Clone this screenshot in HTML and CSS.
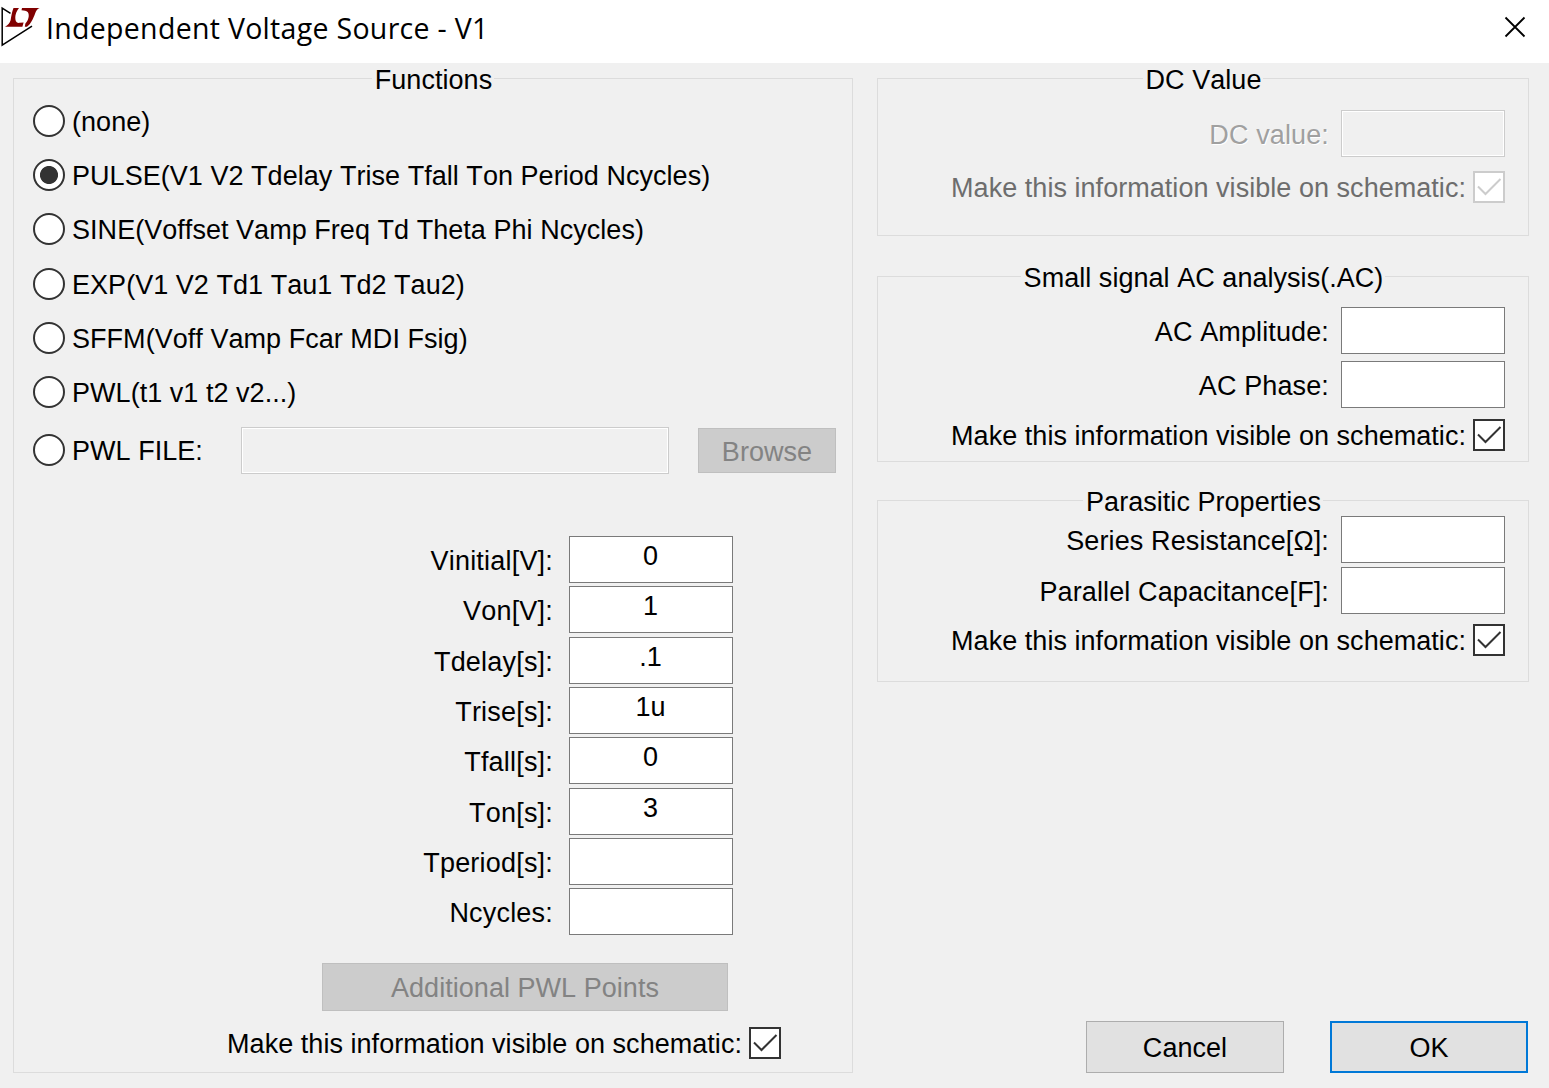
FILE: index.html
```html
<!DOCTYPE html>
<html lang="en">
<head>
<meta charset="utf-8">
<title>Independent Voltage Source - V1</title>
<link rel="stylesheet" href="styles.css">
</head>
<body>
<header class="titlebar">
  <svg class="logo" width="42" height="50" viewBox="0 0 42 50">
    <path d="M10.500 13.300L2.200 8V45.200L32 26.200" fill="none" stroke="#000" stroke-width="1.500"/>
    <path d="M13.500 8H19c-3 3.500-4.500 8.500-3.200 13 .8 1.700 2.400 2.200 4 1.800l3.800-.3-1.200 4.300H5c2.800-1.500 4.800-3.500 5.600-6.500.8-4.500 1.300-8.500 2.900-12.300z" fill="#800000"/>
    <path d="M22 8h17.700c-2.400.8-3.600 2.600-4.500 5.200-1.800 5-4.200 10.800-8.200 13.500h-2.200l.6-3.200c2.800-3 4.600-8.300 2.300-11.500-1.300-1.400-3.500-1.700-6.200-1.800z" fill="#800000"/>
  </svg>
  <h1 class="title">Independent Voltage Source - V1</h1>
  <svg class="close" width="22" height="22" viewBox="0 0 22 22"><path d="M1.500 1.500l19 19M20.500 1.500l-19 19" stroke="#000" stroke-width="1.800" fill="none"/></svg>
</header>
<main class="dialog">
  <section class="group functions">
    <h2 class="legend"><span>Functions</span></h2>
    <div class="radios">
      <div class="radio"><i class="dot"></i><span>(none)</span></div>
      <div class="radio"><i class="dot on"></i><span>PULSE(V1 V2 Tdelay Trise Tfall Ton Period Ncycles)</span></div>
      <div class="radio"><i class="dot"></i><span>SINE(Voffset Vamp Freq Td Theta Phi Ncycles)</span></div>
      <div class="radio low"><i class="dot"></i><span>EXP(V1 V2 Td1 Tau1 Td2 Tau2)</span></div>
      <div class="radio low"><i class="dot"></i><span>SFFM(Voff Vamp Fcar MDI Fsig)</span></div>
      <div class="radio low"><i class="dot"></i><span>PWL(t1 v1 t2 v2...)</span></div>
    </div>
    <div class="file">
      <div class="radio low"><i class="dot"></i><span>PWL FILE:</span></div>
      <div class="field off path"></div>
      <div class="button off browse">Browse</div>
    </div>
    <div class="params">
      <span class="label">Vinitial[V]:</span><div class="field">0</div>
      <span class="label">Von[V]:</span><div class="field">1</div>
      <span class="label">Tdelay[s]:</span><div class="field">.1</div>
      <span class="label">Trise[s]:</span><div class="field">1u</div>
      <span class="label">Tfall[s]:</span><div class="field">0</div>
      <span class="label">Ton[s]:</span><div class="field">3</div>
      <span class="label">Tperiod[s]:</span><div class="field"></div>
      <span class="label">Ncycles:</span><div class="field"></div>
    </div>
    <div class="button off points">Additional PWL Points</div>
    <div class="visible">
      <span>Make this information visible on schematic:</span>
      <svg class="check" width="32" height="32" viewBox="0 0 32 32"><rect x="1" y="1" width="30" height="30"/><path d="M5 15.500l7.500 7.500L27.500 8"/></svg>
    </div>
  </section>
  <div class="side">
    <section class="group dc">
      <h2 class="legend"><span>DC Value</span></h2>
      <div class="row"><span class="label etched">DC value:</span><div class="field off"></div></div>
      <div class="visible dim">
        <span>Make this information visible on schematic:</span>
        <svg class="check" width="32" height="32" viewBox="0 0 32 32"><rect x="1" y="1" width="30" height="30"/><path d="M5 15.500l7.500 7.500L27.500 8"/></svg>
      </div>
    </section>
    <section class="group ac">
      <h2 class="legend"><span>Small signal AC analysis(.AC)</span></h2>
      <div class="row"><span class="label">AC Amplitude:</span><div class="field"></div></div>
      <div class="row"><span class="label">AC Phase:</span><div class="field"></div></div>
      <div class="visible">
        <span>Make this information visible on schematic:</span>
        <svg class="check" width="32" height="32" viewBox="0 0 32 32"><rect x="1" y="1" width="30" height="30"/><path d="M5 15.500l7.500 7.500L27.500 8"/></svg>
      </div>
    </section>
    <section class="group parasitic">
      <h2 class="legend"><span>Parasitic Properties</span></h2>
      <div class="row"><span class="label">Series Resistance[Ω]:</span><div class="field"></div></div>
      <div class="row"><span class="label">Parallel Capacitance[F]:</span><div class="field"></div></div>
      <div class="visible">
        <span>Make this information visible on schematic:</span>
        <svg class="check" width="32" height="32" viewBox="0 0 32 32"><rect x="1" y="1" width="30" height="30"/><path d="M5 15.500l7.500 7.500L27.500 8"/></svg>
      </div>
    </section>
    <footer class="actions">
      <div class="button">Cancel</div>
      <div class="button ok">OK</div>
    </footer>
  </div>
</main>
</body>
</html>
```
FILE: styles.css
```css
* { box-sizing: border-box; }
body {
  margin: 0;
  width: 1549px;
  height: 1088px;
  overflow: hidden;
  display: flex;
  flex-direction: column;
  background: #f0f0f0;
  color: #000;
  font: 27px/30px "Liberation Sans", Arial, sans-serif;
  font-kerning: none;
  letter-spacing: 0.04px;
  white-space: nowrap;
}
.titlebar {
  height: 63px;
  flex: none;
  display: flex;
  align-items: flex-start;
  background: #fff;
}
.logo { flex: none; }
.title {
  margin: 8px 0 0 4px;
  font: 400 28.5px/40px "Open Sans", "Noto Sans", sans-serif;
  letter-spacing: 0.3px;
}
.close { margin: 16px 23px 0 auto; }
.dialog {
  flex: 1;
  display: flex;
  gap: 24px;
  padding: 15px 20px 15px 13px;
}
.group {
  border: 1px solid #dcdcdc;
  display: flex;
  flex-direction: column;
}
.legend {
  margin: -14px 0 0;
  height: 30px;
  font: inherit;
  text-align: center;
}
.legend span {
  display: inline-block;
  padding: 0 2px 0 3px;
  background: #f0f0f0;
}
.functions { width: 840px; }
.radios {
  display: flex;
  flex-direction: column;
  gap: 22.2px;
  margin: 10px 0 0 19px;
}
.radio {
  display: flex;
  align-items: center;
  gap: 7px;
  height: 32px;
}
.radio span { padding-top: 1px; }
.radio.low span { padding-top: 3px; }
.dot {
  width: 32px;
  height: 32px;
  border: 2px solid #333;
  border-radius: 50%;
  background: #fff;
}
.dot.on { background: radial-gradient(circle, #333 8.6px, #fff 9.4px); }
.file {
  display: flex;
  align-items: center;
  height: 47px;
  margin: 19px 0 0 19px;
}
.file .radio { width: 208px; margin-top: -1px; }
.field {
  width: 164px;
  height: 47px;
  flex: none;
  border: 1px solid #7a7a7a;
  background: #fff;
  text-align: center;
  line-height: 38px;
}
.field.off {
  border-color: #ccc;
  background: #f0f0f0;
  box-shadow: inset 0 0 0 1px #fff;
}
.path { width: 428px; }
.button {
  width: 198px;
  height: 52px;
  display: flex;
  align-items: center;
  justify-content: center;
  padding-top: 2px;
  border: 1px solid #adadad;
  background: #e1e1e1;
}
.button.off {
  border-color: #bfbfbf;
  background: #ccc;
  color: #838383;
}
.browse { width: 138px; height: 45px; margin-left: 29px; padding-top: 3px; }
.params {
  display: grid;
  grid-template-columns: 539px 164px;
  grid-auto-rows: 47px;
  gap: 3.33px 16px;
  margin-top: 62px;
}
.params .field { padding-right: 1px; }
.label { padding-top: 10px; text-align: right; letter-spacing: 0.12px; }
.params .label { letter-spacing: 0.2px; }
.points { width: 406px; height: 48px; margin: 28px 0 0 308px; }
.visible {
  display: flex;
  align-items: center;
  justify-content: flex-end;
  gap: 7px;
  height: 32px;
}
.visible span { padding-top: 2px; }
.check { fill: #fff; stroke: #333; stroke-width: 2; }
.check path { fill: none; }
.dim { color: #6d6d6d; }
.dim .check { stroke: #ccc; }
.functions .visible { margin: 16px 71px 0 0; }
.side { width: 652px; display: flex; flex-direction: column; }
.side .group { padding-right: 23px; }
.side .legend { margin-right: -23px; }
.row { display: flex; justify-content: flex-end; gap: 12px; height: 47px; }
.etched { color: #a0a0a0; text-shadow: 1px 1px 0 #fff; }
.dc { height: 158px; }
.dc .row { margin-top: 15px; }
.dc .visible { margin-top: 14px; }
.ac { height: 186px; margin-top: 40px; }
.ac .row { margin-top: 14px; }
.ac .row + .row { margin-top: 7px; }
.ac .visible { margin-top: 11px; }
.parasitic { height: 182px; margin-top: 38px; }
.parasitic .row { margin-top: -1px; }
.parasitic .row + .row { margin-top: 4px; }
.parasitic .visible { margin-top: 10px; }
.actions {
  display: flex;
  justify-content: flex-end;
  gap: 46px;
  margin: auto 1px 0 0;
}
.ok { border: 2px solid #0078d7; }
```
